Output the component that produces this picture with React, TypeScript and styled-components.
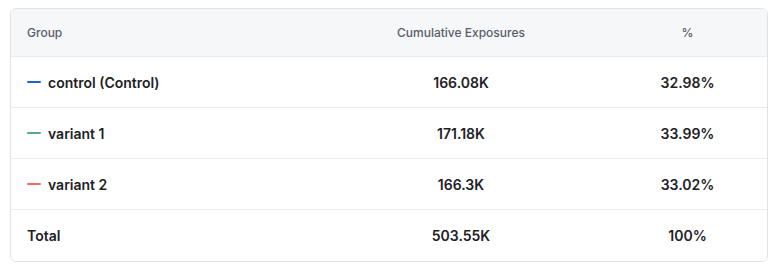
import React from "react";
import styled, { createGlobalStyle } from "styled-components";

const Global = createGlobalStyle`
  html, body { margin: 0; padding: 0; background: #ffffff; }
  body { font-family: Inter, "Noto Sans", sans-serif; -webkit-font-smoothing: antialiased; }
`;

const Page = styled.div`
  padding: 8px 10px 6px 10px;
`;

const Card = styled.div`
  width: 758px;
  box-sizing: border-box;
  border: 1px solid #dfe2e6;
  border-radius: 6px;
  overflow: hidden;
  background: #fff;
`;

const Row = styled.div<{ $header?: boolean; $last?: boolean }>`
  display: grid;
  grid-template-columns: 303px 294px 1fr;
  align-items: center;
  height: ${(p) => (p.$header ? "48px" : "51px")};
  background: ${(p) => (p.$header ? "#f6f7f9" : "#ffffff")};
  border-bottom: ${(p) => (p.$last ? "none" : "1px solid #e9ebee")};
  box-sizing: border-box;
`;

const HeadCell = styled.div<{ $align?: "left" | "center" }>`
  font-size: 12px;
  font-weight: 500;
  color: #575f69;
  text-align: ${(p) => p.$align ?? "left"};
  padding-left: ${(p) => (p.$align === "center" ? "0" : "16px")};
`;

const Cell = styled.div<{ $align?: "left" | "center" }>`
  font-size: 14px;
  font-weight: 600;
  color: #1e2126;
  text-align: ${(p) => p.$align ?? "left"};
  padding-left: ${(p) => (p.$align === "center" ? "0" : "16px")};
  display: flex;
  align-items: center;
  justify-content: ${(p) => (p.$align === "center" ? "center" : "flex-start")};
  gap: 7px;
`;

const Swatch = styled.span<{ $color: string }>`
  display: inline-block;
  width: 14px;
  height: 2px;
  border-radius: 1px;
  background: ${(p) => p.$color};
`;

const rows = [
  { name: "control (Control)", color: "#2161d4", exp: "166.08K", pct: "32.98%" },
  { name: "variant 1", color: "#5aa98b", exp: "171.18K", pct: "33.99%" },
  { name: "variant 2", color: "#f36a5d", exp: "166.3K", pct: "33.02%" },
];

export default function App() {
  return (
    <>
      <Global />
      <Page>
        <Card>
          <Row $header>
            <HeadCell>Group</HeadCell>
            <HeadCell $align="center">Cumulative Exposures</HeadCell>
            <HeadCell $align="center">%</HeadCell>
          </Row>
          {rows.map((r) => (
            <Row key={r.name}>
              <Cell>
                <Swatch $color={r.color} />
                {r.name}
              </Cell>
              <Cell $align="center">{r.exp}</Cell>
              <Cell $align="center">{r.pct}</Cell>
            </Row>
          ))}
          <Row $last>
            <Cell>Total</Cell>
            <Cell $align="center">503.55K</Cell>
            <Cell $align="center">100%</Cell>
          </Row>
        </Card>
      </Page>
    </>
  );
}
